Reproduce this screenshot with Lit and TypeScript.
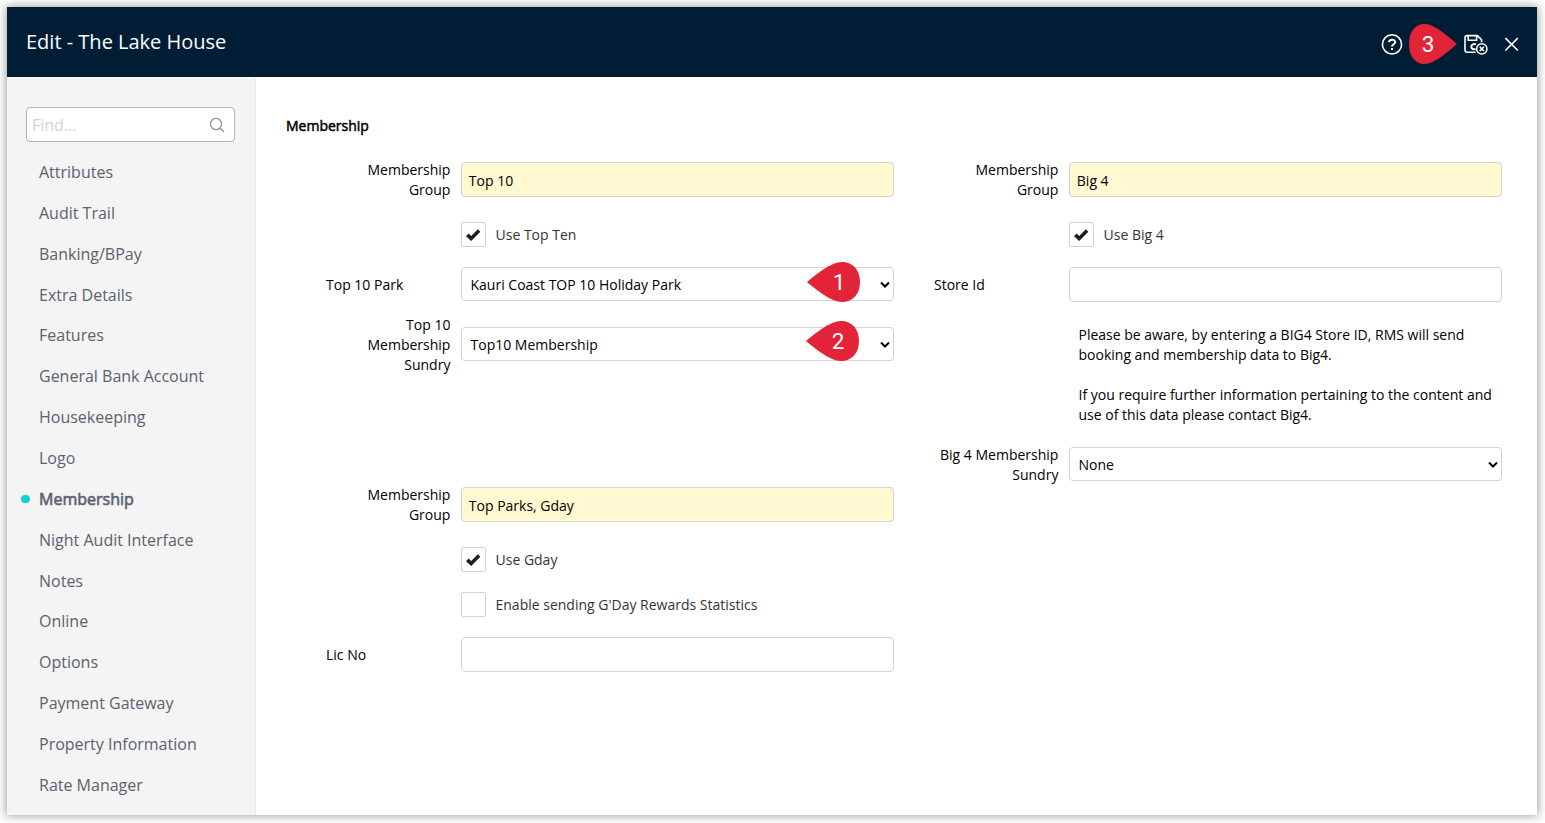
import { LitElement, html, css } from "lit";
import { customElement, property } from "lit/decorators.js";

const NAV = [
  "Attributes", "Audit Trail", "Banking/BPay", "Extra Details", "Features",
  "General Bank Account", "Housekeeping", "Logo", "Membership",
  "Night Audit Interface", "Notes", "Online", "Options", "Payment Gateway",
  "Property Information", "Rate Manager",
];

/** Teardrop callout with a step number; points left or right. */
@customElement("step-pin")
class StepPin extends LitElement {
  @property() n = "1";
  @property() dir = "left";
  static styles = css`
    :host { display: block; width: 54px; height: 40px; }
    svg { display: block; }
    text { font: 22.5px Roboto, "Liberation Sans", sans-serif; fill: #fff; text-anchor: middle; }
  `;
  render() {
    const left = this.dir === "left";
    const d = left
      ? "M0 20 C9 12.5 24 0 35 0 C46 0 53 8 53 20 C53 32 46 40 35 40 C24 40 9 27.5 0 20Z"
      : "M48 20 C39 12.5 26 0 15.5 0 C6 0 0 8 0 20 C0 32 6 40 15.5 40 C26 40 39 27.5 48 20Z";
    return html`<svg width="54" height="40" viewBox="0 0 54 40">
      <path d=${d} fill="#e22338"></path>
      <text x=${left ? 32 : 19} y="28">${this.n}</text>
    </svg>`;
  }
}

/** One form line: caption on the left, control in the slot. */
@customElement("form-row")
class FormRow extends LitElement {
  @property() label = "";
  @property({ type: Boolean, reflect: true }) single = false;
  static styles = css`
    :host { display: grid; grid-template-columns: 125px 433px; column-gap: 10px; align-items: start; }
    .label { text-align: right; line-height: 20px; white-space: pre-line; padding-right: 0.6px; }
    :host([single]) .label { text-align: left; padding-top: 10px; }
  `;
  render() {
    return html`<div class="label">${this.label}</div><slot></slot>`;
  }
}

@customElement("app-root")
class AppRoot extends LitElement {
  static styles = css`
    * { box-sizing: border-box; }
    :host {
      display: block; box-sizing: border-box; width: 1545px; height: 823px; padding: 7px; overflow: hidden;
      background: #fff; color: #000; font: 14px/20px "Open Sans", "Noto Sans", sans-serif;
    }
    .window {
      width: 1530px; height: 808px; display: flex; flex-direction: column;
      background: #fff; box-shadow: 0 0 9px 1px rgba(0, 0, 0, 0.38);
    }
    header {
      height: 70px; flex: none; display: flex; align-items: center; justify-content: space-between;
      padding: 0 17px 0 19px; background: #001d36; color: #fff;
    }
    h1 { margin: 0; font-size: 20px; font-weight: 400; line-height: 70px; }
    .tools { display: flex; align-items: center; padding-top: 4px; }
    .tools step-pin { margin: 0 1px 0 6px; }
    .tools svg { display: block; }
    .tools .close { margin-left: 16px; }
    .body { flex: 1; min-height: 0; display: flex; }
    nav { width: 249px; flex: none; padding: 30px 20px 0 19px; background: #f4f4f4; border-right: 1px solid #e9e9e9; overflow: hidden; }
    .search {
      height: 35px; width: 209px; display: flex; align-items: center; justify-content: space-between;
      padding: 0 9px 0 5px; border: 1px solid #b4b4b4; border-radius: 4px; background: #fff;
      color: #d3d3d5; font-size: 16px;
    }
    ul { list-style: none; margin: 10px 0 0; padding: 0; }
    li { height: 40.87px; line-height: 41px; padding-left: 13px; font-size: 16px; color: #5a6270; position: relative; }
    .current { -webkit-text-stroke: 0.6px #5a6270; }
    .current::before {
      content: ""; position: absolute; left: -5px; top: 16px; width: 8.5px; height: 8.5px;
      border-radius: 50%; background: #18cdd8;
    }
    main { flex: 1; padding: 39px 0 0 30px; }
    h2 { margin: 0 0 24px; font-size: 14px; font-weight: 400; line-height: 20px; color: #000; -webkit-text-stroke: 0.5px #000; }
    .columns { display: flex; gap: 40px; padding-left: 40px; }
    .h45 { height: 45px; }
    .h50 { height: 50px; }
    .h60 { height: 60px; }
    .h120 { height: 120px; }
    .h170 { height: 170px; }
    .field {
      height: 35px; margin-top: 2px; padding: 1px 6.8px 0; line-height: 33px;
      border: 1px solid #d3d3d3; border-radius: 4px; background: #fff; color: #000;
    }
    .filled { background: #fff8d0; }
    .select {
      height: 34px; display: flex; align-items: center; justify-content: space-between;
      position: relative; padding: 2px 3px 0 8.5px; line-height: 32px;
    }
    .mid { margin-top: 12px; }
    .select step-pin { position: absolute; right: 32px; top: -6px; }
    .mid step-pin { right: 33px; top: -7px; }
    .check { display: flex; align-items: center; gap: 9.5px; height: 25px; margin-top: 2px; color: #333; }
    .box {
      width: 25px; height: 25px; display: grid; place-items: center;
      border: 1px solid #d3d3d3; border-radius: 2px; background: #fff;
    }
    .note { padding-left: 9.5px; width: 433px; }
    .note p { margin: 0 0 20px; white-space: nowrap; }
  `;

  check(text: string, on = true) {
    return html`<form-row class="h45"><div class="check">
      <span class="box">${on ? html`<svg width="15" height="13" viewBox="0 0 15 13">
        <path d="M0 8.3 L2.6 5.6 L5.2 8 L11.8 1.2 L14.4 3.8 L5.2 13Z" fill="#1b1f27"></path></svg>` : ""}</span>
      <span>${text}</span></div></form-row>`;
  }

  select(text: string, pin = "", extra = "") {
    return html`<div class="field select ${extra}"><span>${text}</span>
      ${pin ? html`<step-pin n=${pin}></step-pin>` : ""}
      <svg width="10" height="8" viewBox="0 0 10 8"><path d="M1 1.5 L5 5.5 L9 1.5" fill="none" stroke="#000" stroke-width="2"></path></svg>
    </div>`;
  }

  render() {
    return html`<div class="window">
      <header>
        <h1>Edit - The Lake House</h1>
        <div class="tools">
          <svg width="22" height="22" viewBox="0 0 22 22" fill="none" stroke="#fff" stroke-width="1.6">
            <circle cx="11" cy="11.4" r="9.6"></circle>
            <path d="M7.9 9.2 C8.2 5.8 14.2 5.8 14.2 9.1 C14.2 11.4 11 11.2 11 13.4 M11 15 V17" stroke-width="2"></path>
          </svg>
          <step-pin n="3" dir="right"></step-pin>
          <svg width="24" height="22" viewBox="0 0 24 22" fill="none" stroke="#fff" stroke-width="1.6">
            <path d="M11.5 19.3 H3.2 Q1 19.3 1 17.1 V4.8 Q1 2.6 3.2 2.6 H13.4 L17.6 6.8 V9.3"></path>
            <path d="M4.2 2.9 V7.3 H12.6 V2.9"></path>
            <path d="M11.8 11.6 C10 10.5 7.3 11.4 7.3 13.7 C7.3 15.9 9.8 16.9 11.6 15.9" stroke-width="2"></path>
            <circle cx="17.8" cy="15.9" r="5.2" stroke-width="1.5"></circle>
            <path d="M15.7 13.8 L19.9 18 M19.9 13.8 L15.7 18" stroke-width="1.6"></path>
          </svg>
          <svg class="close" width="16" height="16" viewBox="0 0 16 16">
            <path d="M1.4 2.1 L13.8 14.5 M13.8 2.1 L1.4 14.5" stroke="#fff" stroke-width="1.6"></path>
          </svg>
        </div>
      </header>
      <div class="body">
        <nav>
          <div class="search"><span>Find...</span>
            <svg width="16" height="16" viewBox="0 0 16 16" fill="none" stroke="#8f8f8f" stroke-width="1.3">
              <circle cx="7" cy="7" r="5.6"></circle><path d="M11 11 L15 15"></path>
            </svg>
          </div>
          <ul>${NAV.map((t) => html`<li class=${t === "Membership" ? "current" : ""}>${t}</li>`)}</ul>
        </nav>
        <main>
          <h2>Membership</h2>
          <div class="columns">
            <section>
              <form-row class="h60" label="Membership
Group"><div class="field filled">Top 10</div></form-row>
              ${this.check("Use Top Ten")}
              <form-row class="h50" single label="Top 10 Park">${this.select("Kauri Coast TOP 10 Holiday Park", "1")}</form-row>
              <form-row class="h170" label="Top 10
Membership
Sundry">${this.select("Top10 Membership", "2", "mid")}</form-row>
              <form-row class="h60" label="Membership
Group"><div class="field filled">Top Parks, Gday</div></form-row>
              ${this.check("Use Gday")}
              ${this.check("Enable sending G'Day Rewards Statistics", false)}
              <form-row single label="Lic No"><div class="field"></div></form-row>
            </section>
            <section>
              <form-row class="h60" label="Membership
Group"><div class="field filled">Big 4</div></form-row>
              ${this.check("Use Big 4")}
              <form-row class="h60" single label="Store Id"><div class="field"></div></form-row>
              <form-row class="h120"><div class="note">
                <p>Please be aware, by entering a BIG4 Store ID, RMS will send<br>booking and membership data to Big4.</p>
                <p>If you require further information pertaining to the content and<br>use of this data please contact Big4.</p>
              </div></form-row>
              <form-row label="Big 4 Membership
Sundry">${this.select("None")}</form-row>
            </section>
          </div>
        </main>
      </div>
    </div>`;
  }
}
